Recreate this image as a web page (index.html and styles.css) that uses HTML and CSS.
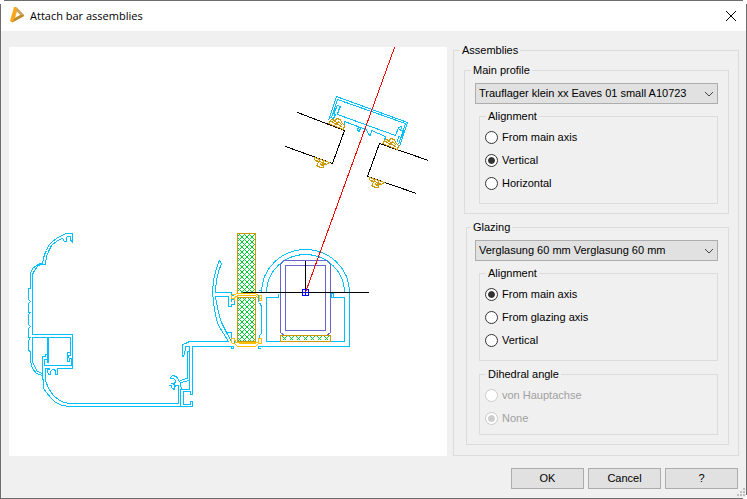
FILE: index.html
```html
<!DOCTYPE html>
<html lang="en">
<head>
<meta charset="utf-8">
<title>Attach bar assemblies</title>
<link rel="stylesheet" href="styles.css">
</head>
<body>
<div class="window">
  <header class="titlebar">
    <svg class="app-icon" viewBox="0 0 16 18" aria-hidden="true">
      <path d="M5 0 H7 L15 8 L14.500 9 L3 15.500 L1 14 Z M8 4.500 L6 11 L11.500 8 Z" fill="#f9a81e" fill-rule="evenodd"/>
      <path d="M11.500 8 L15 8 L14.500 9.500 L3 15.500 L6 11 Z" fill="#bd8a2c"/>
      <path d="M7 0 L15 8 L11.500 8 L8 4.500 Z" fill="#c9a468"/>
    </svg>
    <h1 class="title">Attach bar assemblies</h1>
    <button class="close" type="button" aria-label="Close">
      <svg viewBox="0 0 12 12" aria-hidden="true"><path d="M1 1 L11 11 M11 1 L1 11"/></svg>
    </button>
  </header>
  <form class="dialog">
    <div class="content">
      <div class="canvas">
        <svg viewBox="8.500 46.500 438 409" preserveAspectRatio="xMidYMid meet" role="img" aria-label="Section of the bar assembly">
          <defs>
            <clipPath id="panes"><path d="M237 233 H255 V293 H237 Z M237 297 H255 V341 H237 Z"/></clipPath>
          </defs>
          <!-- gutter profile -->
          <g class="cyan">
            <path d="M72 242 V233 H66 L61 235 L56 238 L52 241 L48 245 L46 250 L44 254 L43 258 L42 263 H40 L36 265 L32 268 L30 273 V288 H28 V299 L30 301 L28 303 V312 H30 L28 314 V324 L30 326 L28 328 V337 H30 L28 340 V350 L30 351 V361 L32 368 L36 373 L42 375"/>
            <path d="M72 241 L70 240 V236 H67 L66 237 V241 H64 L62 238 L57 240 L51 245 L48 251 L46 256 L45 264 H40 L37 266 L34 270 L32 274 V334 H72 V368 H57 V374 H55 V371 L54 369 H52 L50 371 V374 H48 L47 371 V369 H49"/>
            <path d="M47 354 V337 H32 V361 L34 366 L37 371 L42 373"/>
            <path d="M47 354 H45 V356 H42 V378 L43 380 V388 L46 392 L50 397 L55 402 L62 405 L69 406 H192 V401 H190 V404 H183 V391 H190 V394 H192 V346 H233"/>
            <path d="M48 362 V337 H70 V352 H67 V361 H69 M47 337 V360 M70 352 V355 H68 V357 M71 365 V358 H69 V361 M71 365 H44 V359 H47 V362 H48"/>
            <path d="M49 368 H45 V380 L48 388 L53 395 L59 400 L64 402 L69 403 H178 V385 H175"/>
            <path d="M182 356 V344 L185 343 L189 341 H228 M182 356 L184 355 L185 346 H189 V389 H180 V406 M189 351 H187 V378 L182 379 L179 381 M189 380 L180 382 V386 L182 389"/>
            <path d="M179 381 L177 378 L176 376 L172 375 L170 377 V378 H173 L175 380 V382 L173 383 H170 M168 385 H171 V387 L172 388 L174 389 V387 L175 385 L173 384"/>
          </g>
          <!-- side cover -->
          <g class="cyan">
            <path d="M221 263 L219 260 L218 262 L215 271 L213 280 L212 291 L213 302 L215 315 L218 325 L223 333 L228 341"/>
            <path d="M221 263 L218 271 L216 280 L215 290 V292 H231 V294 L234 296 M215 296 H228 V306 H231 V304 H234 V299 H231 V301 M215 296 L216 302 L218 312 L221 322 L226 332 H231 V337 L234 339 V343 M226 332 L231 341 V336 M233 346 V348 H231 V346"/>
          </g>
          <!-- glass panes -->
          <g class="green" clip-path="url(#panes)">
            <path d="M237 217 l18 18m-18-13l18 18m-18-13l18 18m-18-13l18 18m-18-13l18 18m-18-13l18 18m-18-13l18 18m-18-13l18 18m-18-13l18 18m-18-13l18 18m-18-13l18 18m-18-13l18 18m-18-13l18 18m-18-13l18 18m-18-13l18 18m-18-13l18 18m-18-13l18 18m-18-13l18 18m-18-13l18 18m-18-13l18 18m-18-13l18 18m-18-13l18 18m-18-13l18 18m-18-13l18 18m-18-13l18 18"/>
            <path d="M237 236 l18-18m-18 23l18-18m-18 23l18-18m-18 23l18-18m-18 23l18-18m-18 23l18-18m-18 23l18-18m-18 23l18-18m-18 23l18-18m-18 23l18-18m-18 23l18-18m-18 23l18-18m-18 23l18-18m-18 23l18-18m-18 23l18-18m-18 23l18-18m-18 23l18-18m-18 23l18-18m-18 23l18-18m-18 23l18-18m-18 23l18-18m-18 23l18-18m-18 23l18-18m-18 23l18-18m-18 23l18-18"/>
          </g>
          <path class="gold" fill="none" d="M237 233 H255 V293 H237 Z M237 297 H255 V341 H237 Z"/>
          <path class="amber" d="M231 294 H234 L237 293 H255 L259 296 M231 294 V298 H234 V300 M234 297 L238 295 H255 L258 298 H261 V295 H259 V300 H261 V297 M231 342 V338 H234 L235 342 H258 V338 H261 V343 H258 L255 346 H237 L234 343 H231 M238 343 H255"/>
          <!-- eaves beam -->
          <g class="cyan">
            <path d="M261 292 A44 43 0 0 1 349 292 V346 H258 V348 H260 M266 292 A39 38 0 0 1 344 292"/>
            <path d="M278 293 V297 H266 V341 H280 M330 341 H344 V297 H331 V293 H333 V297"/>
            <path d="M258 303 H260 V305 H261 V333 L259 335 V337 M258 294 V301 M258 290 H261"/>
          </g>
          <path class="violet" d="M285 260 H326 L330 264 V332 L326 335 H284 L280 332 V264 L283 260 Z M285 265 H325 V330 H285 Z"/>
          <path class="green" d="M282 336 L286 340 M286 336 L282 340 M289 336 L293 340 M293 336 L289 340 M296 336 L300 340 M300 336 L296 340 M303 336 L307 340 M307 336 L303 340 M310 336 L314 340 M314 336 L310 340 M317 336 L321 340 M321 336 L317 340 M324 336 L328 340 M328 336 L324 340"/>
          <rect class="gold" x="280" y="335" width="50" height="6" fill="none"/>
          <path class="black" d="M242 292 H368 M305 260 V292"/>
          <!-- rafter cap -->
          <g class="cyan">
            <path d="M328 120 L336 96 L407 122 L399 146 M331 117 L337 99 L405 123 L398 144 M334 107 L337 105 L340 106 L338 110 L337 114 L395 135 L398 127 L401 126 L400 131"/>
            <path d="M336 107 L333 113 L335 114 L333 118 L330 117 M399 129 L403 131 L401 137 L398 136 L397 142"/>
            <path d="M344 126 V121 L360 127 L359 131 L357 130 L358 126 M360 127 L366 129 L368 134 L370 135 L371 130 L385 136 L384 140"/>
          </g>
          <path class="black" d="M297 112 L344 130 L332 163 L285 146 M428 160 L379 143 L367 176 L416 193"/>
          <!-- rubber gaskets -->
          <g class="gold">
            <g id="gasket-top" fill="none"><path d="M328 123 L331 119 L335 120 L336 118 L340 119 L341 122 L344 125 L343 129 L328 123 M331 123 L333 120 L336 122 L334 125 M336 125 L338 121 L341 124 L339 127 M330 121 L342 126"/></g>
            <use href="#gasket-top" x="54" y="20"/>
            <g id="gasket-bottom" fill="none"><path d="M314 157 L329 162 L326 164 L324 163 L323 167 L320 167 L316 165 L318 162 L314 159 Z M318 159 L321 162 L319 165 M323 161 L321 165 L325 164 M316 160 L327 164"/></g>
            <use href="#gasket-bottom" x="55" y="20"/>
          </g>
          <path class="red" d="M394 47 L305 292"/>
          <path class="blue" d="M302 289 H308 V295 H302 Z M305 289 V295 M302 292 H308"/>
          <path class="red" d="M307 286 L305 292"/>
        </svg>
      </div>
      <fieldset class="group assemblies">
        <legend>Assemblies</legend>
        <fieldset class="group section">
          <legend>Main profile</legend>
          <div class="combo">
            <select aria-label="Main profile"><option>Trauflager klein xx Eaves 01 small A10723</option></select>
            <svg viewBox="0 0 10 6" aria-hidden="true"><path d="M1 1 L5 5 L9 1"/></svg>
          </div>
          <fieldset class="group options">
            <legend>Alignment</legend>
            <label><input type="radio" name="main-align">From main axis</label>
            <label><input type="radio" name="main-align" checked>Vertical</label>
            <label><input type="radio" name="main-align">Horizontal</label>
          </fieldset>
        </fieldset>
        <fieldset class="group section glazing">
          <legend>Glazing</legend>
          <div class="combo">
            <select aria-label="Glazing"><option>Verglasung 60 mm Verglasung 60 mm</option></select>
            <svg viewBox="0 0 10 6" aria-hidden="true"><path d="M1 1 L5 5 L9 1"/></svg>
          </div>
          <fieldset class="group options">
            <legend>Alignment</legend>
            <label><input type="radio" name="glass-align" checked>From main axis</label>
            <label><input type="radio" name="glass-align">From glazing axis</label>
            <label><input type="radio" name="glass-align">Vertical</label>
          </fieldset>
          <fieldset class="group options dihedral" disabled>
            <legend>Dihedral angle</legend>
            <label><input type="radio" name="dihedral">von Hauptachse</label>
            <label><input type="radio" name="dihedral" checked>None</label>
          </fieldset>
        </fieldset>
      </fieldset>
    </div>
    <footer class="actions">
      <button type="button">OK</button>
      <button type="button">Cancel</button>
      <button type="button">?</button>
    </footer>
    <svg class="grip" viewBox="0 0 8 8" aria-hidden="true"><path d="M6 0h2v2h-2z M3 3h2v2h-2z M6 3h2v2h-2z M0 6h2v2h-2z M3 6h2v2h-2z M6 6h2v2h-2z"/></svg>
  </form>
</div>
</body>
</html>
```

FILE: styles.css
```css
* { box-sizing: border-box; }

body {
  margin: 0;
  background: #fff;
  color: #000;
  font: 11px/13px "Liberation Sans", Arial, sans-serif;
}

.window {
  display: flex;
  flex-direction: column;
  min-height: 100vh;
  padding: 1px;
  background:
    linear-gradient(#6d6d6d, #6d6d6d) 4px 0 / calc(100% - 8px) 1px no-repeat,
    linear-gradient(#6d6d6d, #6d6d6d) 0 4px / 1px 100% no-repeat,
    linear-gradient(#6d6d6d, #6d6d6d) 100% 4px / 1px calc(100% - 8px) no-repeat,
    linear-gradient(#6d6d6d, #6d6d6d) 0 100% / calc(100% - 4px) 1px no-repeat,
    #fff;
}

.titlebar {
  display: flex;
  align-items: center;
  height: 30px;
  padding: 0 7px 0 8px;
}

.app-icon { width: 16px; height: 18px; }

.title {
  flex: 1;
  margin: 0 0 0 5px;
  font: 11px/16px "Open Sans", "Noto Sans", sans-serif;
}

.close {
  display: flex;
  padding: 2px;
  border: 0;
  background: none;
}

.close svg {
  width: 12px;
  height: 12px;
  fill: none;
  stroke: #000;
}

.dialog {
  position: relative;
  flex: 1;
  display: flex;
  flex-direction: column;
  gap: 12px;
  padding: 13px 7px 9px 8px;
  background: #f0f0f0;
}

.content {
  flex: 1;
  display: flex;
  gap: 6px;
}

.canvas {
  flex: 1;
  min-width: 0;
  margin-top: 3px;
  background: #fff;
}

.canvas svg {
  display: block;
  width: 100%;
  height: 100%;
  shape-rendering: crispEdges;
}

.cyan { fill: none; stroke: #00bfff; }
.green { fill: none; stroke: #00cc33; }
.gold { stroke: #cc9900; }
.amber { fill: none; stroke: #ffbf00; }
.violet { fill: none; stroke: #6666cc; }
.black { fill: none; stroke: #000; }
.red { fill: none; stroke: #f00; }
.blue { fill: none; stroke: #00f; }

.group {
  min-width: 0;
  margin: 0;
  padding: 0;
  border: 1px solid #dcdcdc;
}

.group legend {
  margin-left: -4px;
  padding: 0 2px;
}

.assemblies {
  flex: 0 0 286px;
  padding: 7px 9px 9px 10px;
}

.section { padding: 6px 10px 9px; }

.glazing {
  margin: 7px 0 0 2px;
  padding-left: 8px;
}

.options {
  margin: 6px 0 0 4px;
  padding: 3px 5px 8px;
}

.options legend { margin-left: 1px; }

.dihedral {
  margin-top: 7px;
  padding-bottom: 4px;
}

.options label {
  display: flex;
  align-items: center;
  gap: 4px;
  height: 23px;
}

.options:disabled label { color: #a0a0a0; }

input[type="radio"] {
  appearance: none;
  width: 13px;
  height: 13px;
  margin: 0;
  border: 1px solid #333;
  border-radius: 50%;
  background: #fff;
}

input[type="radio"]:checked {
  padding: 2px;
  background: #333 content-box;
  box-shadow: inset 0 0 0 2px #fff;
}

input[type="radio"]:disabled { border-color: #ccc; }
input[type="radio"]:disabled:checked { background-color: #ccc; }

.combo { position: relative; }

.combo select {
  display: block;
  width: 100%;
  height: 21px;
  padding: 0 20px 0 3px;
  border: 1px solid #adadad;
  border-radius: 0;
  appearance: none;
  background: #e1e1e1;
  color: #000;
  font: inherit;
}

.combo svg {
  position: absolute;
  top: 8px;
  right: 4px;
  width: 10px;
  height: 6px;
  fill: none;
  stroke: #444;
  pointer-events: none;
}

.actions {
  display: flex;
  justify-content: flex-end;
  gap: 4px;
  padding-right: 1px;
}

.actions button {
  width: 73px;
  height: 21px;
  padding: 0;
  border: 1px solid #adadad;
  background: #e1e1e1;
  color: #000;
  font: inherit;
}

.grip {
  position: absolute;
  right: 1px;
  bottom: 2px;
  width: 8px;
  height: 8px;
  fill: #bfbfbf;
}
```
